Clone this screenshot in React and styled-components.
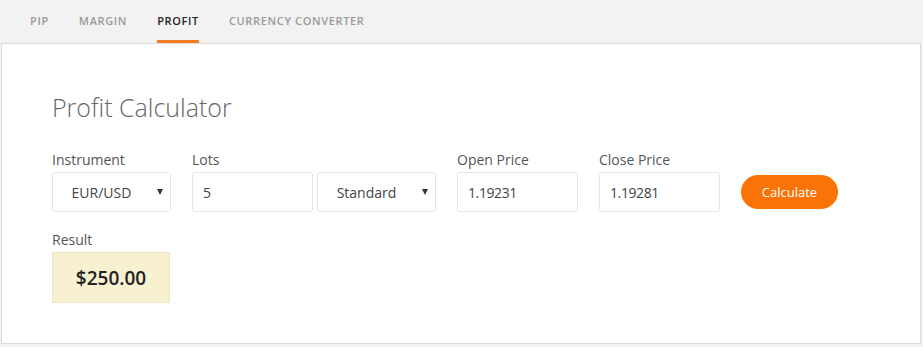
import React, { useState } from "react";
import styled, { createGlobalStyle } from "styled-components";

const GlobalStyle = createGlobalStyle`
  body {
    margin: 0;
    background: #f2f2f2;
    font-family: "Open Sans", "Liberation Sans", sans-serif;
  }
`;

const tabs = ["PIP", "MARGIN", "PROFIT", "CURRENCY CONVERTER"];

export default function App() {
  const [active, setActive] = useState("PROFIT");

  return (
    <Page>
      <GlobalStyle />
      <TabBar>
        {tabs.map((t) => (
          <Tab key={t} active={t === active} onClick={() => setActive(t)}>
            {t}
          </Tab>
        ))}
      </TabBar>
      <Panel>
        <Title>Profit Calculator</Title>
        <Row>
          <Field>
            <Label>Instrument</Label>
            <SelectWrap>
              <Select defaultValue="EUR/USD">
                <option>EUR/USD</option>
                <option>GBP/USD</option>
                <option>USD/JPY</option>
              </Select>
            </SelectWrap>
          </Field>
          <Field>
            <Label>Lots</Label>
            <Pair>
              <Input defaultValue="5" />
              <SelectWrap>
                <Select defaultValue="Standard">
                  <option>Standard</option>
                  <option>Mini</option>
                  <option>Micro</option>
                </Select>
              </SelectWrap>
            </Pair>
          </Field>
          <Field>
            <Label>Open Price</Label>
            <Input defaultValue="1.19231" />
          </Field>
          <Field>
            <Label>Close Price</Label>
            <Input defaultValue="1.19281" />
          </Field>
          <Button type="button">Calculate</Button>
        </Row>
        <Field>
          <Label>Result</Label>
          <Result>$250.00</Result>
        </Field>
      </Panel>
    </Page>
  );
}

const Page = styled.div`
  width: 923px;
  height: 347px;
`;

const TabBar = styled.div`
  display: flex;
  gap: 30px;
  height: 43px;
  padding-left: 30px;
  box-sizing: border-box;
`;

const Tab = styled.div`
  display: flex;
  align-items: center;
  height: 100%;
  box-sizing: border-box;
  padding-top: 1px;
  font-size: 11px;
  font-weight: 600;
  letter-spacing: 0.65px;
  color: ${(p) => (p.active ? "#222" : "#9a9a9a")};
  border-bottom: 3px solid ${(p) => (p.active ? "#f47a1f" : "transparent")};
  cursor: pointer;
`;

const Panel = styled.div`
  margin: 0 2px 0 1px;
  height: 301px;
  box-sizing: border-box;
  background: #fff;
  border: 1px solid #dcdcdc;
  padding: 46px 0 0 50px;
`;

const Title = styled.h1`
  margin: 0 0 26px;
  font-size: 25px;
  line-height: 34px;
  font-weight: 300;
  color: #666;
`;

const Row = styled.div`
  display: flex;
  align-items: flex-end;
  gap: 21px;
  margin-bottom: 18px;
`;

const Field = styled.div`
  display: flex;
  flex-direction: column;
`;

const Pair = styled.div`
  display: flex;
  gap: 4px;
`;

const Label = styled.label`
  font-size: 14px;
  line-height: 20px;
  color: #555;
  margin-bottom: 2px;
`;

const Input = styled.input`
  width: 121px;
  height: 40px;
  box-sizing: border-box;
  border: 1px solid #e6e6e6;
  border-radius: 3px;
  padding: 0 10px;
  font-family: inherit;
  font-size: 14px;
  letter-spacing: -0.4px;
  color: #444;
  outline: none;
`;

const SelectWrap = styled.div`
  position: relative;
  &::after {
    content: "";
    position: absolute;
    right: 8px;
    top: 17px;
    border-left: 3.5px solid transparent;
    border-right: 3.5px solid transparent;
    border-top: 6px solid #333;
    pointer-events: none;
  }
`;

const Select = styled.select`
  appearance: none;
  width: 119px;
  height: 40px;
  box-sizing: border-box;
  border: 1px solid #e6e6e6;
  border-radius: 3px;
  background: #fff;
  padding: 0 20px 0 0;
  text-align: center;
  text-align-last: center;
  font-family: inherit;
  font-size: 14px;
  color: #444;
  outline: none;
`;

const Button = styled.button`
  width: 97px;
  height: 34px;
  margin-bottom: 3px;
  border: none;
  border-radius: 17px;
  background: #f97306;
  color: #fff;
  font-family: inherit;
  font-size: 13px;
  cursor: pointer;
`;

const Result = styled.div`
  width: 118px;
  height: 51px;
  box-sizing: border-box;
  display: flex;
  align-items: center;
  justify-content: center;
  background: #f7f0d1;
  border: 1px solid #ede5c2;
  font-size: 19px;
  font-weight: 600;
  color: #222;
`;
